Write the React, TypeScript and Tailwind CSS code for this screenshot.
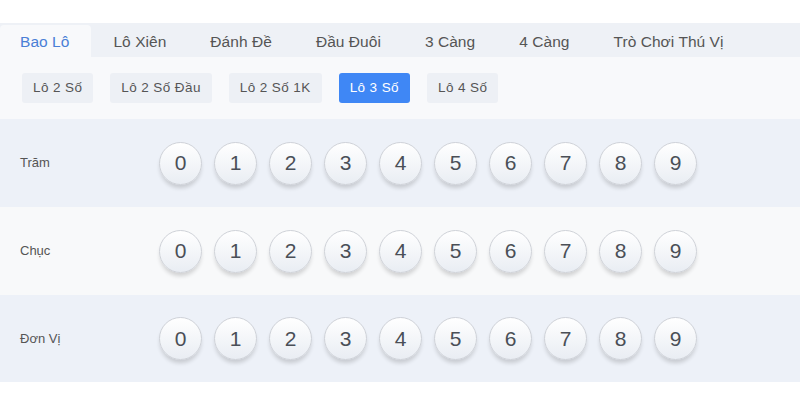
import { useState } from 'react';

const tabs = ['Bao Lô', 'Lô Xiên', 'Đánh Đề', 'Đầu Đuôi', '3 Càng', '4 Càng', 'Trò Chơi Thú Vị'];
const subTabs = ['Lô 2 Số', 'Lô 2 Số Đầu', 'Lô 2 Số 1K', 'Lô 3 Số', 'Lô 4 Số'];
const rows = [
  { label: 'Trăm', bg: 'bg-[#edf1f8]' },
  { label: 'Chục', bg: 'bg-[#f8f9fa]' },
  { label: 'Đơn Vị', bg: 'bg-[#edf1f8]' },
];
const digits = [0, 1, 2, 3, 4, 5, 6, 7, 8, 9];

export default function App() {
  const [activeTab, setActiveTab] = useState(0);
  const [activeSub, setActiveSub] = useState(3);

  return (
    <div className="w-[800px] h-[400px] bg-white font-['Liberation_Sans',Arial,sans-serif] overflow-hidden">
      <div className="h-[23px]" />

      {/* Tabs */}
      <div className="flex h-[34px] bg-[#eef1f6] items-end">
        {tabs.map((tab, i) => (
          <button
            key={tab}
            onClick={() => setActiveTab(i)}
            className={
              i === activeTab
                ? 'h-[32px] pl-[20px] pr-[22px] pt-[1px] text-[15.5px] tracking-[0.05px] text-[#4a7fd6] bg-[#f8f9fb] rounded-t-[4px]'
                : 'h-[32px] px-[22px] pt-[1px] text-[15.5px] tracking-[0.05px] text-[#555]'
            }
          >
            {tab}
          </button>
        ))}
      </div>

      {/* Sub tabs */}
      <div className="flex items-center gap-[17px] h-[62px] pl-[22px] bg-[#f8f9fb]">
        {subTabs.map((s, i) => (
          <button
            key={s}
            onClick={() => setActiveSub(i)}
            className={
              i === activeSub
                ? 'h-[30px] px-[11px] text-[13.5px] tracking-[0.4px] rounded-[3px] bg-[#3f87f5] text-white'
                : 'h-[30px] px-[11px] text-[13.5px] tracking-[0.4px] rounded-[3px] bg-[#edf0f5] text-[#555]'
            }
          >
            {s}
          </button>
        ))}
      </div>

      {/* Number rows */}
      {rows.map((row, r) => (
        <div key={row.label} className={`flex items-center pl-5 ${row.bg} ${r === 2 ? 'h-[87px]' : 'h-[88px]'}`}>
          <div className="w-[139px] text-[13px] text-[#555]">{row.label}</div>
          <div className="flex gap-[12px]">
            {digits.map((d) => (
              <div
                key={d}
                className="w-[43px] h-[43px] rounded-full border border-[#cfd2d8] bg-gradient-to-b from-white to-[#e9edf3] shadow-[0_4px_4px_-1px_rgba(0,0,0,0.16)] flex items-center justify-center text-[21px] text-[#4a4f57]"
              >
                {d}
              </div>
            ))}
          </div>
        </div>
      ))}
    </div>
  );
}
